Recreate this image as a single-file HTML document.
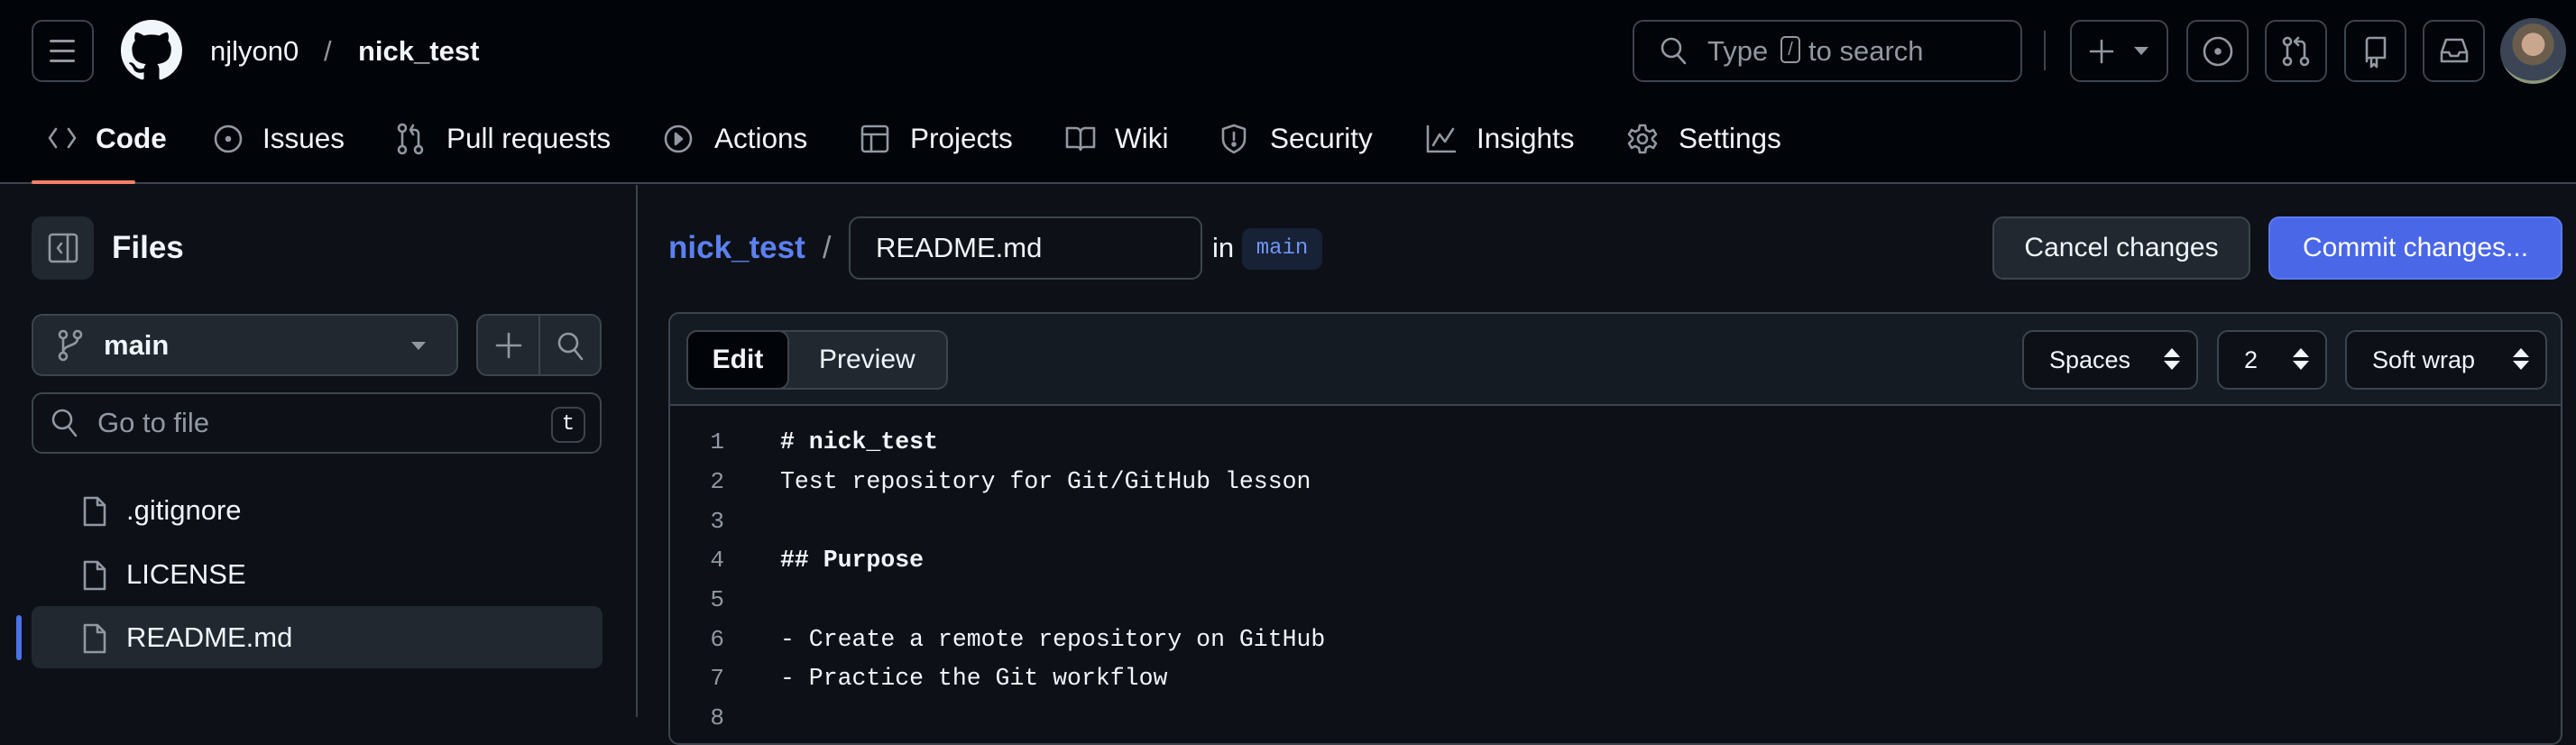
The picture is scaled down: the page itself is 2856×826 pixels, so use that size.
<!DOCTYPE html>
<html><head><meta charset="utf-8"><style>
*{box-sizing:border-box;margin:0;padding:0}
body{width:2856px;height:795px;overflow:hidden;background:#0d1117;font-family:"Liberation Sans",sans-serif;color:#f0f6fc;position:relative}
.a{position:absolute}
.hdr{left:0;top:0;width:2856px;height:204px;background:#010409;border-bottom:2px solid #3d444d}
.btn{position:absolute;border:2px solid #3d444d;border-radius:12px;background:transparent}
.t{position:absolute;font-size:31px;line-height:40px;white-space:nowrap}
svg{position:absolute;fill:none;stroke:#9198a1;stroke-width:2.6;stroke-linecap:round;stroke-linejoin:round}
.nav{font-size:31.5px;color:#f0f6fc}
.sel{position:absolute;top:366px;height:66px;border:2px solid #3d444d;border-radius:12px;background:#0d1117;font-size:27px;line-height:62px;padding-left:28px}
.arr{position:absolute;right:18px;top:20px;width:0;height:0;border-left:9px solid transparent;border-right:9px solid transparent}
.ln{position:absolute;left:741px;width:62px;text-align:right;color:#9198a1;font-family:"Liberation Mono",monospace;font-size:26px}
.cd{position:absolute;left:865px;font-family:"Liberation Mono",monospace;font-size:26.5px;color:#f0f6fc;white-space:pre}
</style></head><body>
<div class="a hdr"></div>
<div class="btn" style="left:35px;top:22px;width:69px;height:69px"></div>
<div class="a" style="left:55px;top:44px;width:28px;height:3px;background:#9198a1;border-radius:2px;box-shadow:0 11px 0 #9198a1,0 22px 0 #9198a1"></div>
<svg style="left:134px;top:22px;stroke:none;fill:#f0f6fc" width="68" height="68" viewBox="0 0 16 16"><path d="M8 0C3.580 0 0 3.58 0 8c0 3.54 2.29 6.53 5.47 7.590.4.07.55-.17.55-.38 0-.19-.01-.82-.01-1.49-2.01.37-2.53-.49-2.69-.94-.09-.23-.48-.94-.82-1.13-.28-.15-.68-.52-.01-.53.63-.01 1.080.58 1.23.82.72 1.21 1.87.87 2.33.66.07-.52.28-.87.51-1.07-1.78-.2-3.64-.89-3.64-3.95 0-.87.31-1.59.82-2.15-.08-.2-.36-1.02.08-2.12 0 0 .67-.21 2.2.82.64-.18 1.32-.27 2-.27.68 0 1.36.09 2 .27 1.53-1.04 2.2-.82 2.2-.82.44 1.1.16 1.92.08 2.12.51.56.82 1.27.82 2.15 0 3.07-1.87 3.75-3.65 3.95.29.25.54.73.54 1.48 0 1.07-.01 1.93-.01 2.2 0 .21.15.46.55.38A8.013 8.013 0 0016 8c0-4.42-3.58-8-8-8z"/></svg>
<div class="t" style="left:233px;top:37px;color:#f0f6fc">njlyon0</div>
<div class="t" style="left:359px;top:37px;color:#9198a1">/</div>
<div class="t" style="left:397px;top:37px;font-weight:bold">nick_test</div>

<div class="btn" style="left:1810px;top:22px;width:432px;height:69px"></div>
<svg style="left:1840px;top:40px" width="32" height="34" viewBox="0 0 32 34"><circle cx="13" cy="13" r="10"/><path d="M20 21l8 9"/></svg>
<div class="t" style="left:1893px;top:37px;color:#9198a1">Type</div>
<div class="a" style="left:1974px;top:40px;width:22px;height:30px;border:2px solid #9198a1;border-radius:5px;color:#9198a1;font-size:20px;text-align:center;line-height:26px">/</div>
<div class="t" style="left:2005px;top:37px;color:#9198a1">to search</div>
<div class="a" style="left:2266px;top:34px;width:2px;height:44px;background:#3d444d"></div>
<div class="btn" style="left:2295px;top:22px;width:109px;height:69px"></div>
<svg style="left:2313px;top:40px" width="34" height="34"><path d="M17 5v24M5 17h24"/></svg>
<div class="a" style="left:2366px;top:52px;border-left:8px solid transparent;border-right:8px solid transparent;border-top:9px solid #9198a1"></div>
<div class="btn" style="left:2424px;top:22px;width:69px;height:69px"></div>
<svg style="left:2440px;top:38px" width="38" height="38"><circle cx="19" cy="19" r="15"/><circle cx="19" cy="19" r="2.5" fill="#9198a1"/></svg>
<div class="btn" style="left:2511px;top:22px;width:69px;height:69px"></div>
<svg style="left:2527px;top:38px" width="38" height="38"><circle cx="9" cy="8" r="4"/><circle cx="9" cy="30" r="4"/><circle cx="28" cy="30" r="4"/><path d="M9 12v14M28 26V12a4 4 0 00-4-4h-6M21 4l-4 4 4 4"/></svg>
<div class="btn" style="left:2599px;top:22px;width:69px;height:69px"></div>
<svg style="left:2615px;top:38px" width="38" height="38"><path d="M9 30V7a3 3 0 013-3h17v22H12a3 3 0 00-3 3M14 26v10l3-3 3 3V26"/></svg>
<div class="btn" style="left:2686px;top:22px;width:69px;height:69px"></div>
<svg style="left:2702px;top:38px" width="38" height="38"><path d="M5 20l5-14h18l5 14v10H5zM5 20h8l2 4h8l2-4h8"/></svg>
<div class="a" style="left:2772px;top:20px;width:73px;height:73px;border-radius:50%;background:radial-gradient(circle at 50% 40%,#c9a78e 0 22%,#6b5d4b 23% 40%,#3b4556 41% 70%,#8a9a7a 71%)"></div>

<svg style="left:52px;top:139px" width="34" height="28"><path d="M10 4L3 14l7 10M24 4l7 10-7 10"/></svg>
<div class="t nav" style="left:106px;top:133px;font-weight:bold">Code</div>
<svg style="left:236px;top:137px" width="34" height="34"><circle cx="17" cy="17" r="14"/><circle cx="17" cy="17" r="2" fill="#9198a1"/></svg>
<div class="t nav" style="left:291px;top:133px">Issues</div>
<svg style="left:438px;top:136px" width="34" height="36"><circle cx="8" cy="6" r="4"/><circle cx="8" cy="30" r="4"/><circle cx="26" cy="30" r="4"/><path d="M8 10v16M26 26V12a4 4 0 00-4-4h-4M20 3l-3 5 3 5"/></svg>
<div class="t nav" style="left:495px;top:133px">Pull requests</div>
<svg style="left:735px;top:137px" width="34" height="34"><circle cx="17" cy="17" r="14"/><path d="M14 11l7 6-7 6z" fill="#9198a1"/></svg>
<div class="t nav" style="left:792px;top:133px">Actions</div>
<svg style="left:953px;top:137px" width="34" height="34"><rect x="3" y="3" width="28" height="28" rx="3"/><path d="M3 12h28M13 12v19"/></svg>
<div class="t nav" style="left:1009px;top:133px">Projects</div>
<svg style="left:1180px;top:139px" width="36" height="30"><path d="M3 3h10a5 5 0 015 5v19a4 4 0 00-4-3H3zM33 3H23a5 5 0 00-5 5v19a4 4 0 014-3h11z"/></svg>
<div class="t nav" style="left:1236px;top:133px">Wiki</div>
<svg style="left:1352px;top:136px" width="32" height="36"><path d="M16 3l12 4v11c0 8-6 12-12 15C10 30 4 26 4 18V7z M16 11v8"/><circle cx="16" cy="24" r="1.5" fill="#9198a1"/></svg>
<div class="t nav" style="left:1408px;top:133px">Security</div>
<svg style="left:1580px;top:137px" width="36" height="34"><path d="M3 3v28h30M9 24l7-12 6 8 9-14"/></svg>
<div class="t nav" style="left:1637px;top:133px">Insights</div>
<svg style="left:1803px;top:136px" width="36" height="36"><circle cx="18" cy="18" r="5"/><path d="M15 3h6l1 5 4 2 4-2 3 5-4 4v2l4 4-3 5-4-2-4 2-1 5h-6l-1-5-4-2-4 2-3-5 4-4v-2l-4-4 3-5 4 2 4-2z"/></svg>
<div class="t nav" style="left:1861px;top:133px">Settings</div>
<div class="a" style="left:35px;top:200px;width:115px;height:4px;background:#f78166;border-radius:2px"></div>

<div class="a" style="left:705px;top:205px;width:2px;height:590px;background:#3d444d"></div>
<div class="a" style="left:35px;top:240px;width:69px;height:70px;border-radius:12px;background:#212830"></div>
<svg style="left:52px;top:257px" width="36" height="36"><rect x="3" y="3" width="30" height="30" rx="3"/><path d="M23 3v30M16 13l-4 5 4 5"/></svg>
<div class="t" style="left:124px;top:255px;font-size:35px;font-weight:bold">Files</div>
<div class="a" style="left:35px;top:348px;width:473px;height:69px;border:2px solid #3d444d;border-radius:12px;background:#212830"></div>
<svg style="left:62px;top:365px" width="30" height="36"><circle cx="8" cy="6" r="4"/><circle cx="8" cy="30" r="4"/><circle cx="24" cy="6" r="4"/><path d="M8 10v16M24 10c0 10-16 6-16 16"/></svg>
<div class="t" style="left:115px;top:363px;font-weight:bold">main</div>
<div class="a" style="left:456px;top:379px;border-left:8px solid transparent;border-right:8px solid transparent;border-top:9px solid #9198a1"></div>
<div class="a" style="left:528px;top:348px;width:139px;height:69px;border:2px solid #3d444d;border-radius:12px;background:#212830"></div>
<div class="a" style="left:597px;top:350px;width:2px;height:65px;background:#3d444d"></div>
<svg style="left:547px;top:366px" width="34" height="34"><path d="M17 4v26M4 17h26"/></svg>
<svg style="left:616px;top:366px" width="34" height="36"><circle cx="14" cy="14" r="10"/><path d="M21 22l8 10"/></svg>
<div class="a" style="left:35px;top:435px;width:632px;height:68px;border:2px solid #3d444d;border-radius:12px;background:#0d1117"></div>
<svg style="left:55px;top:451px" width="34" height="36"><circle cx="14" cy="14" r="10"/><path d="M21 22l8 10"/></svg>
<div class="t" style="left:108px;top:449px;color:#9198a1">Go to file</div>
<div class="a" style="left:611px;top:451px;width:38px;height:40px;border:2px solid #3d444d;border-radius:10px;color:#f0f6fc;font-size:24px;text-align:center;line-height:36px;font-family:'Liberation Mono',monospace">t</div>
<div class="a" style="left:35px;top:672px;width:633px;height:69px;border-radius:10px;background:#212830"></div>
<div class="a" style="left:18px;top:682px;width:6px;height:50px;border-radius:3px;background:#4a73e8"></div>
<svg style="left:90px;top:548px" width="30" height="36"><path d="M4 4h14l8 8v22H4zM18 4v8h8"/></svg>
<div class="t" style="left:140px;top:546px">.gitignore</div>
<svg style="left:90px;top:619px" width="30" height="36"><path d="M4 4h14l8 8v22H4zM18 4v8h8"/></svg>
<div class="t" style="left:140px;top:617px">LICENSE</div>
<svg style="left:90px;top:689px" width="30" height="36"><path d="M4 4h14l8 8v22H4zM18 4v8h8"/></svg>
<div class="t" style="left:140px;top:687px">README.md</div>

<div class="t" style="left:741px;top:255px;font-size:35px;font-weight:bold;color:#5c80f0">nick_test</div>
<div class="t" style="left:912px;top:255px;font-size:34px;color:#9198a1">/</div>
<div class="a" style="left:941px;top:240px;width:392px;height:70px;border:2px solid #3d444d;border-radius:12px;background:#0d1117"></div>
<div class="t" style="left:971px;top:255px">README.md</div>
<div class="t" style="left:1344px;top:255px">in</div>
<div class="a" style="left:1377px;top:253px;width:89px;height:46px;border-radius:10px;background:#182236;color:#6e95f5;font-family:'Liberation Mono',monospace;font-size:24px;line-height:46px;text-align:center">main</div>
<div class="a" style="left:2209px;top:240px;width:286px;height:70px;border:2px solid #3d444d;border-radius:12px;background:#212830;font-size:30px;line-height:66px;text-align:center">Cancel changes</div>
<div class="a" style="left:2515px;top:240px;width:326px;height:70px;border:2px solid #5b7af0;border-radius:12px;background:#4a67e8;font-size:30px;line-height:66px;text-align:center;color:#fff">Commit changes...</div>

<div class="a" style="left:741px;top:346px;width:2100px;height:480px;border:2px solid #3d444d;border-radius:12px;background:#0d1117"></div>
<div class="a" style="left:743px;top:348px;width:2096px;height:102px;border-bottom:2px solid #3d444d;border-radius:10px 10px 0 0;background:#151b23"></div>
<div class="a" style="left:761px;top:366px;width:290px;height:66px;border:2px solid #3d444d;border-radius:12px;background:#212830"></div>
<div class="a" style="left:761px;top:366px;width:114px;height:66px;border:2px solid #3d444d;border-radius:12px;background:#010409;font-size:30px;line-height:62px;text-align:center;font-weight:bold">Edit</div>
<div class="t" style="left:908px;top:379px;font-size:30px">Preview</div>
<div class="sel" style="left:2242px;width:195px">Spaces<div class="arr" style="top:18px;border-bottom:10px solid #f0f6fc"></div><div class="arr" style="top:32px;border-top:10px solid #f0f6fc"></div></div>
<div class="sel" style="left:2458px;width:122px">2<div class="arr" style="top:18px;border-bottom:10px solid #f0f6fc"></div><div class="arr" style="top:32px;border-top:10px solid #f0f6fc"></div></div>
<div class="sel" style="left:2600px;width:224px">Soft wrap<div class="arr" style="top:18px;border-bottom:10px solid #f0f6fc"></div><div class="arr" style="top:32px;border-top:10px solid #f0f6fc"></div></div>

<div class="ln" style="top:475px">1</div><div class="cd" style="top:475px;font-weight:bold"># nick_test</div>
<div class="ln" style="top:519px">2</div><div class="cd" style="top:519px">Test repository for Git/GitHub lesson</div>
<div class="ln" style="top:563px">3</div>
<div class="ln" style="top:606px">4</div><div class="cd" style="top:606px;font-weight:bold">## Purpose</div>
<div class="ln" style="top:650px">5</div>
<div class="ln" style="top:694px">6</div><div class="cd" style="top:694px">- Create a remote repository on GitHub</div>
<div class="ln" style="top:737px">7</div><div class="cd" style="top:737px">- Practice the Git workflow</div>
<div class="ln" style="top:781px">8</div>
</body></html>
